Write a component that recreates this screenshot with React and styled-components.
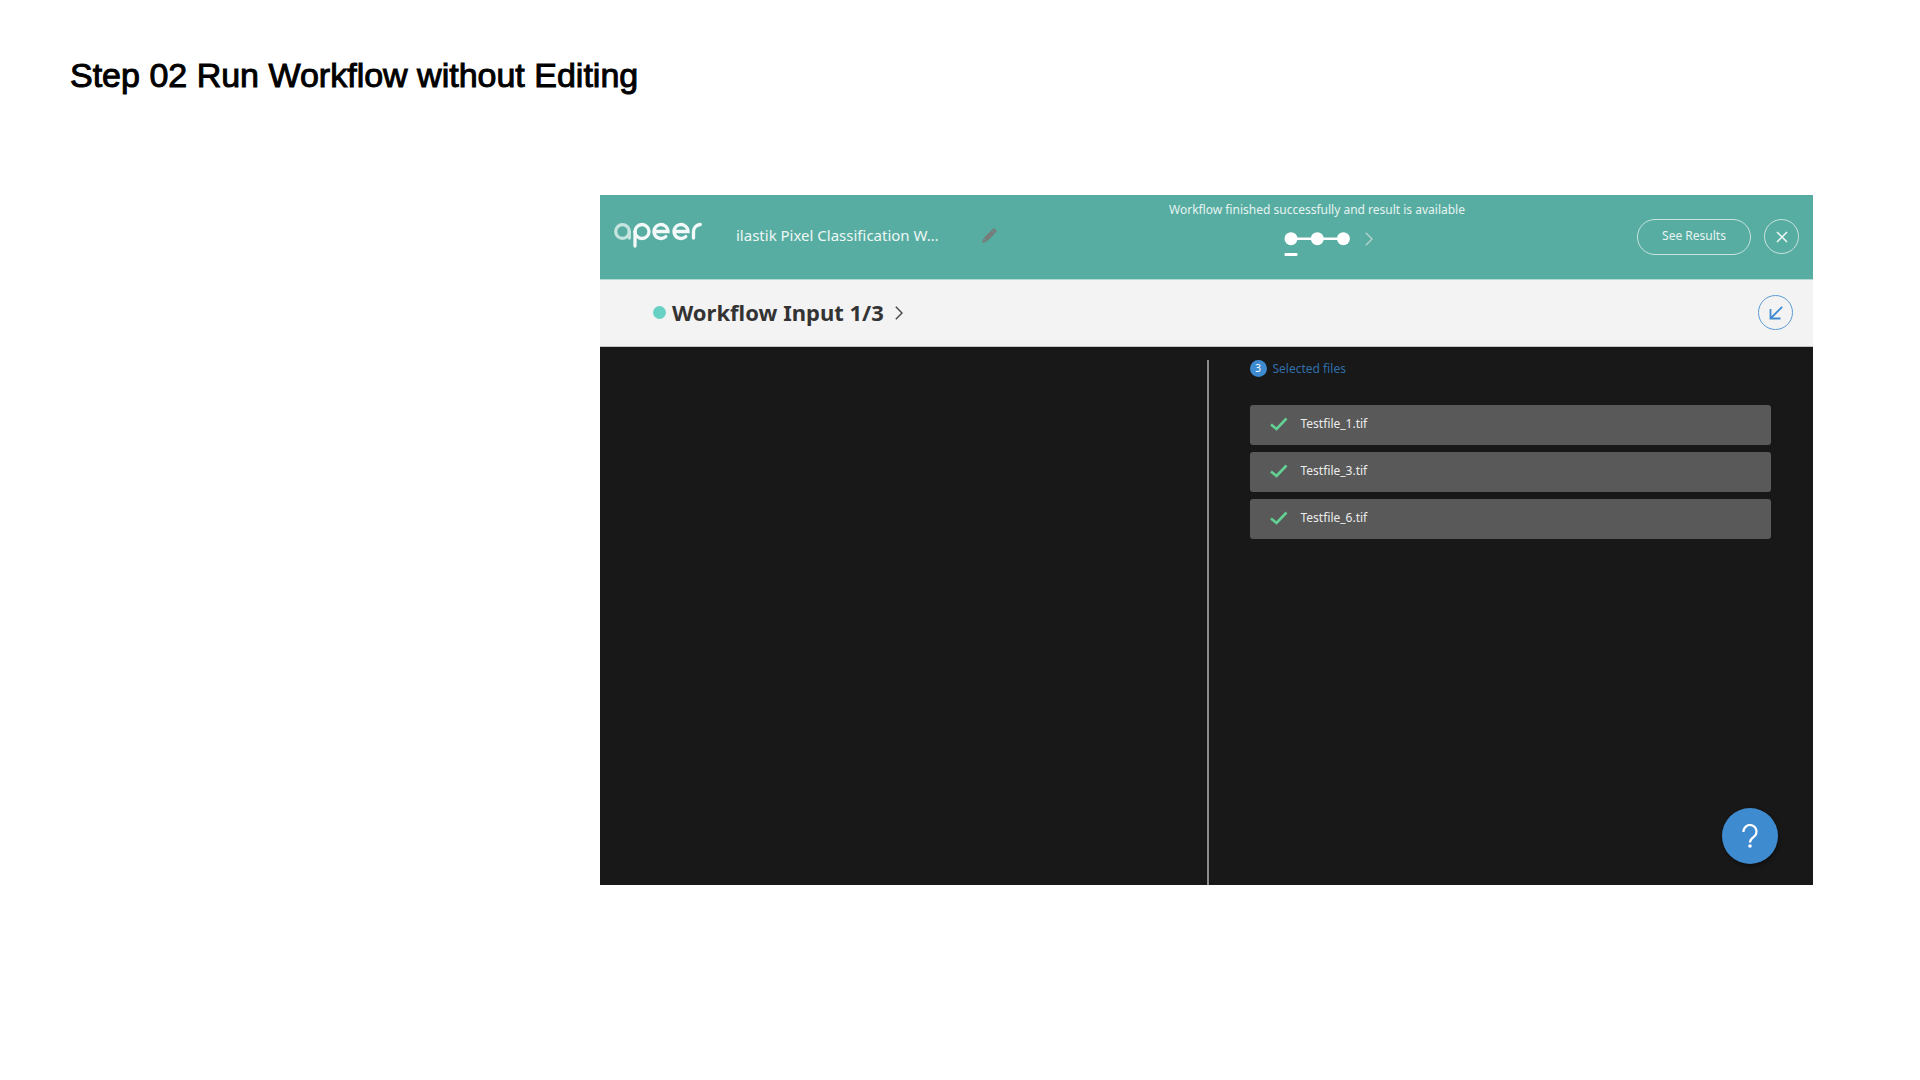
import React from "react";
import styled, { createGlobalStyle } from "styled-components";

const GlobalStyle = createGlobalStyle`
  *, *::before, *::after { box-sizing: border-box; }
  body {
    margin: 0;
    background: #fff;
    font-family: "Noto Sans", "Open Sans", sans-serif;
  }
  h1, h2, p, ul { margin: 0; padding: 0; }
  button { font-family: inherit; cursor: pointer; }
  svg { display: block; flex: none; }
`;

const Page = styled.main`
  padding: 55px 107px 56px 70px;
`;

const PageTitle = styled.h1`
  font-family: "Liberation Sans", Arial, sans-serif;
  font-size: 34px;
  line-height: 40px;
  font-weight: 400;
  color: #000;
  -webkit-text-stroke: 1px #000;
`;

const Frame = styled.section`
  position: relative;
  display: flex;
  flex-direction: column;
  min-height: 690px;
  margin: 100px 0 0 530px;
  background: #181818;
`;

const Header = styled.header`
  display: flex;
  align-items: center;
  height: 85px;
  padding: 0 14px;
  background: #57ada1;
  border-bottom: 1px solid #b5dad5;
  color: #fff;
`;

const Brand = styled.div`
  display: flex;
  align-items: center;
  gap: 34px;
  padding-bottom: 4px;
`;

const WorkflowName = styled.div`
  display: flex;
  align-items: center;
  justify-content: space-between;
  width: 261px;
`;

const NameText = styled.span`
  font-size: 15px;
  line-height: 20px;
  color: #eef7f5;
  white-space: nowrap;
`;

const IconButton = styled.button`
  display: flex;
  padding: 0;
  border: 0;
  background: none;
  color: ${(p) => p.$color};
`;

const Status = styled.div`
  flex: 1;
  align-self: stretch;
  display: flex;
  flex-direction: column;
  align-items: center;
  gap: 13px;
  padding-top: 6px;
`;

const StatusText = styled.p`
  font-size: 12px;
  line-height: 18px;
  color: #e6f3f1;
  white-space: nowrap;
`;

const Stepper = styled.div`
  display: grid;
  grid-template-columns: 1fr auto 1fr;
  align-items: start;
  column-gap: 15px;

  & > :nth-child(1) { grid-column: 2; }
`;

const Actions = styled.div`
  display: flex;
  gap: 13px;
`;

const PillButton = styled.button`
  width: 114px;
  height: 36px;
  padding: 0 0 3px;
  border: 1px solid #c9e4e0;
  border-radius: 18px;
  background: none;
  color: #e6f3f1;
  font-size: 12px;
`;

const RoundButton = styled.button`
  display: flex;
  align-items: center;
  justify-content: center;
  width: 35px;
  height: 35px;
  padding: 0;
  border: 1px solid ${(p) => p.$border};
  border-radius: 50%;
  background: none;
  color: ${(p) => p.$color};
`;

const SubBar = styled.div`
  display: flex;
  align-items: center;
  height: 67px;
  padding: 0 20px 1px 53px;
  background: #f3f3f3;
  border-bottom: 1px solid #c4c4c4;
`;

const Dot = styled.span`
  width: 13px;
  height: 13px;
  margin-right: 6px;
  border-radius: 50%;
  background: #67d2c4;
`;

const InputTitle = styled.h2`
  margin-right: 11px;
  padding-bottom: 2px;
  font-size: 22px;
  line-height: 30px;
  font-weight: 700;
  color: #333;
`;

const Spacer = styled.div`
  flex: 1;
`;

const Body = styled.div`
  flex: 1;
  display: grid;
  grid-template-columns: 1fr 1fr;
  padding-top: 13px;
`;

const FilesPane = styled.div`
  border-left: 2px solid #8c8c8c;
  padding: 0 42px 0 41px;
`;

const Selected = styled.div`
  display: flex;
  align-items: center;
  gap: 6px;
  height: 17px;
  font-size: 12px;
  color: #2f6ea8;
`;

const Count = styled.span`
  width: 17px;
  height: 17px;
  border-radius: 50%;
  background: #3f8bd0;
  color: #fff;
  font-size: 10px;
  line-height: 17px;
  text-align: center;
`;

const FileList = styled.ul`
  display: grid;
  gap: 7px;
  margin-top: 28px;
  list-style: none;
`;

const FileRow = styled.li`
  display: flex;
  align-items: center;
  gap: 13px;
  height: 40px;
  padding: 0 20px 3px;
  border-radius: 3px;
  background: #595959;
  color: #ececec;
  font-size: 12px;
`;

const HelpButton = styled.button`
  position: absolute;
  right: 35px;
  bottom: 21px;
  display: flex;
  align-items: center;
  justify-content: center;
  width: 56px;
  height: 56px;
  padding: 0;
  border: 0;
  border-radius: 50%;
  background: #3f8bd0;
  color: #fff;
  box-shadow: 1px 2px 4px rgba(0, 0, 0, 0.4);
`;

const Logo = () => (
  <svg width="88" height="27" viewBox="0 0 88 27" fill="none" stroke="#f4faf9" strokeWidth="3.300" strokeLinecap="round" role="img" aria-label="apeer">
    <g stroke="#c5e3df">
      <circle cx="8.500" cy="9.500" r="6.800" />
      <path d="M15.300 9.500V16" />
    </g>
    <circle cx="28" cy="9.500" r="7" />
    <path d="M21 9.500V24" />
    <path d="M41 9.500H54A7 7 0 1 0 51.800 14.600" />
    <path d="M61 9.500H74A7 7 0 1 0 71.800 14.600" />
    <path d="M79.500 16V9.500A7 7 0 0 1 86.300 2.500" />
  </svg>
);

const Pencil = () => (
  <svg width="15" height="15" viewBox="0 0 15 15" fill="currentColor">
    <path d="M0 15L1.300 10.400L4.600 13.700ZM1.700 9.900L9.400 2.200L12.800 5.600L5.100 13.300ZM9.800 1.800L11.200.5Q11.800 0 12.400.5L14.500 2.600Q15 3.200 14.500 3.800L13.200 5.200Z" />
  </svg>
);

const Steps = () => (
  <svg width="66" height="26" viewBox="0 0 66 26" fill="#fff" role="img" aria-label="Step 1 of 3">
    <rect x="6" y="5.500" width="54" height="2.500" />
    <circle cx="7" cy="6.700" r="6.500" />
    <circle cx="33.300" cy="6.700" r="6.500" />
    <circle cx="59.400" cy="6.700" r="6.500" />
    <rect x="0.500" y="21" width="13" height="3" rx="1" />
  </svg>
);

const Chevron = ({ width, height, stroke = 1.4 }) => (
  <svg width={width} height={height} viewBox="0 0 8 14" fill="none" stroke="currentColor" strokeWidth={stroke}>
    <path d="M.8.8L7 7L.8 13.200" />
  </svg>
);

const Cross = () => (
  <svg width="12" height="12" viewBox="0 0 12 12" fill="none" stroke="currentColor" strokeWidth="1.500">
    <path d="M1 1L11 11M11 1L1 11" />
  </svg>
);

const ArrowIn = () => (
  <svg width="14" height="14" viewBox="0 0 14 14" fill="none" stroke="currentColor" strokeWidth="1.800">
    <path d="M13.200.8L1.500 12.500M1.500 3V12.500H11.500" />
  </svg>
);

const Check = () => (
  <svg width="18" height="14" viewBox="0 0 18 14" fill="none" stroke="#62d193" strokeWidth="2.600">
    <path d="M1 7.500L6.500 12L16.500 1.500" />
  </svg>
);

const Question = () => (
  <svg width="16" height="24" viewBox="0 0 16 24" fill="none" stroke="currentColor" strokeWidth="2.200">
    <path d="M1.500 8A6.500 6.500 0 1 1 12.300 12.400C9.500 14.500 8 15.500 8 18.500" />
    <circle cx="8" cy="22" r="1.800" fill="currentColor" stroke="none" />
  </svg>
);

const files = ["Testfile_1.tif", "Testfile_3.tif", "Testfile_6.tif"];

export default function App() {
  return (
    <Page>
      <GlobalStyle />
      <PageTitle>Step 02 Run Workflow without Editing</PageTitle>
      <Frame>
        <Header>
          <Brand>
            <Logo />
            <WorkflowName>
              <NameText>ilastik Pixel Classification W…</NameText>
              <IconButton $color="#777b7a" aria-label="Rename workflow">
                <Pencil />
              </IconButton>
            </WorkflowName>
          </Brand>
          <Status>
            <StatusText>Workflow finished successfully and result is available</StatusText>
            <Stepper>
              <Steps />
              <IconButton $color="#b4d3cf" aria-label="Next step">
                <Chevron width={8} height={14} />
              </IconButton>
            </Stepper>
          </Status>
          <Actions>
            <PillButton>See Results</PillButton>
            <RoundButton $border="#c9e4e0" $color="#f2f9f8" aria-label="Close">
              <Cross />
            </RoundButton>
          </Actions>
        </Header>
        <SubBar>
          <Dot />
          <InputTitle>Workflow Input 1/3</InputTitle>
          <IconButton $color="#444" aria-label="Next input">
            <Chevron width={8} height={14} />
          </IconButton>
          <Spacer />
          <RoundButton $border="#5c9bd6" $color="#3f8bd0" aria-label="Collapse">
            <ArrowIn />
          </RoundButton>
        </SubBar>
        <Body>
          <div />
          <FilesPane>
            <Selected>
              <Count>{files.length}</Count>
              <span>Selected files</span>
            </Selected>
            <FileList>
              {files.map((name) => (
                <FileRow key={name}>
                  <Check />
                  <span>{name}</span>
                </FileRow>
              ))}
            </FileList>
          </FilesPane>
        </Body>
        <HelpButton aria-label="Help">
          <Question />
        </HelpButton>
      </Frame>
    </Page>
  );
}
